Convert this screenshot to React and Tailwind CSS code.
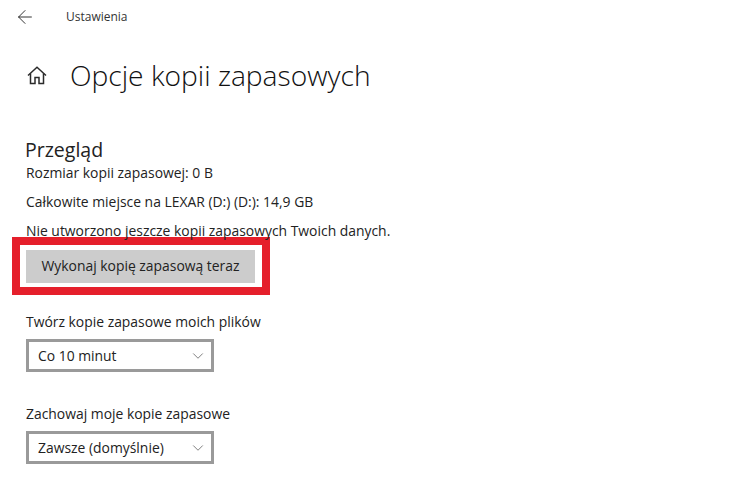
import React from 'react';
import { ArrowLeft, ChevronDown } from 'lucide-react';

const HomeIcon = () => (
  <svg width="20" height="19" viewBox="0 0 20 19" fill="none" stroke="#2b2b2b" strokeWidth="1.5">
    <path d="M1 9.5 10 1.2l9 8.3" />
    <path d="M3.5 7.5V17.5H8V11.5H12V17.5H16.5V7.5" />
  </svg>
);

const Dropdown = ({ label, value, className }) => (
  <div className={className}>
    <div className="text-[13.9px] leading-5 text-[#222]">{label}</div>
    <div className="mt-[7px] w-[188px] h-[33px] border-[3px] border-[#9a9a9a] bg-white flex items-center justify-between pl-[9px] pr-[4px]">
      <span className="pt-[1px] text-[13.9px] text-[#222]">{value}</span>
      <ChevronDown size={18} strokeWidth={1} className="text-[#555]" />
    </div>
  </div>
);

const App = () => {
  return (
    <div className="w-[751px] h-[480px] bg-white overflow-hidden font-['Open_Sans',sans-serif]">
      {/* Title bar */}
      <div className="flex items-center h-[34px] pl-[14px]">
        <ArrowLeft size={22} strokeWidth={1} className="text-[#222]" />
        <span className="ml-[30px] text-[12px] text-[#333]">Ustawienia</span>
      </div>

      <div className="flex items-center mt-[19px] h-[44px] pl-[27px]">
        <HomeIcon />
        <h1 className="ml-[23px] text-[28.2px] font-light text-[#111]">Opcje kopii zapasowych</h1>
      </div>

      <div className="pl-[26px] mt-[40px]">
        <h2 className="-ml-[1px] text-[19.5px] leading-[26px] text-[#222]">Przegląd</h2>
        <div className="text-[13.9px] leading-5 text-[#222]">Rozmiar kopii zapasowej: 0 B</div>
        <div className="mt-[9px] text-[13.9px] leading-5 text-[#222]">Całkowite miejsce na LEXAR (D:) (D:): 14,9 GB</div>
        <div className="mt-[9px] text-[13.9px] leading-5 text-[#222]">Nie utworzono jeszcze kopii zapasowych Twoich danych.</div>

        {/* Highlighted button */}
        <div className="-ml-[14px] -mt-[4px] w-[258px] h-[58px] border-[8px] border-[#e51f2b] bg-white flex items-center pl-[6px]">
          <div className="w-[229px] h-[33px] bg-[#cccccc] flex items-center justify-center text-[13.9px] text-[#222]">
            Wykonaj kopię zapasową teraz
          </div>
        </div>

        <Dropdown className="mt-[17px]" label="Twórz kopie zapasowe moich plików" value="Co 10 minut" />
        <Dropdown className="mt-[32px]" label="Zachowaj moje kopie zapasowe" value="Zawsze (domyślnie)" />
      </div>
    </div>
  );
};

export default App;
